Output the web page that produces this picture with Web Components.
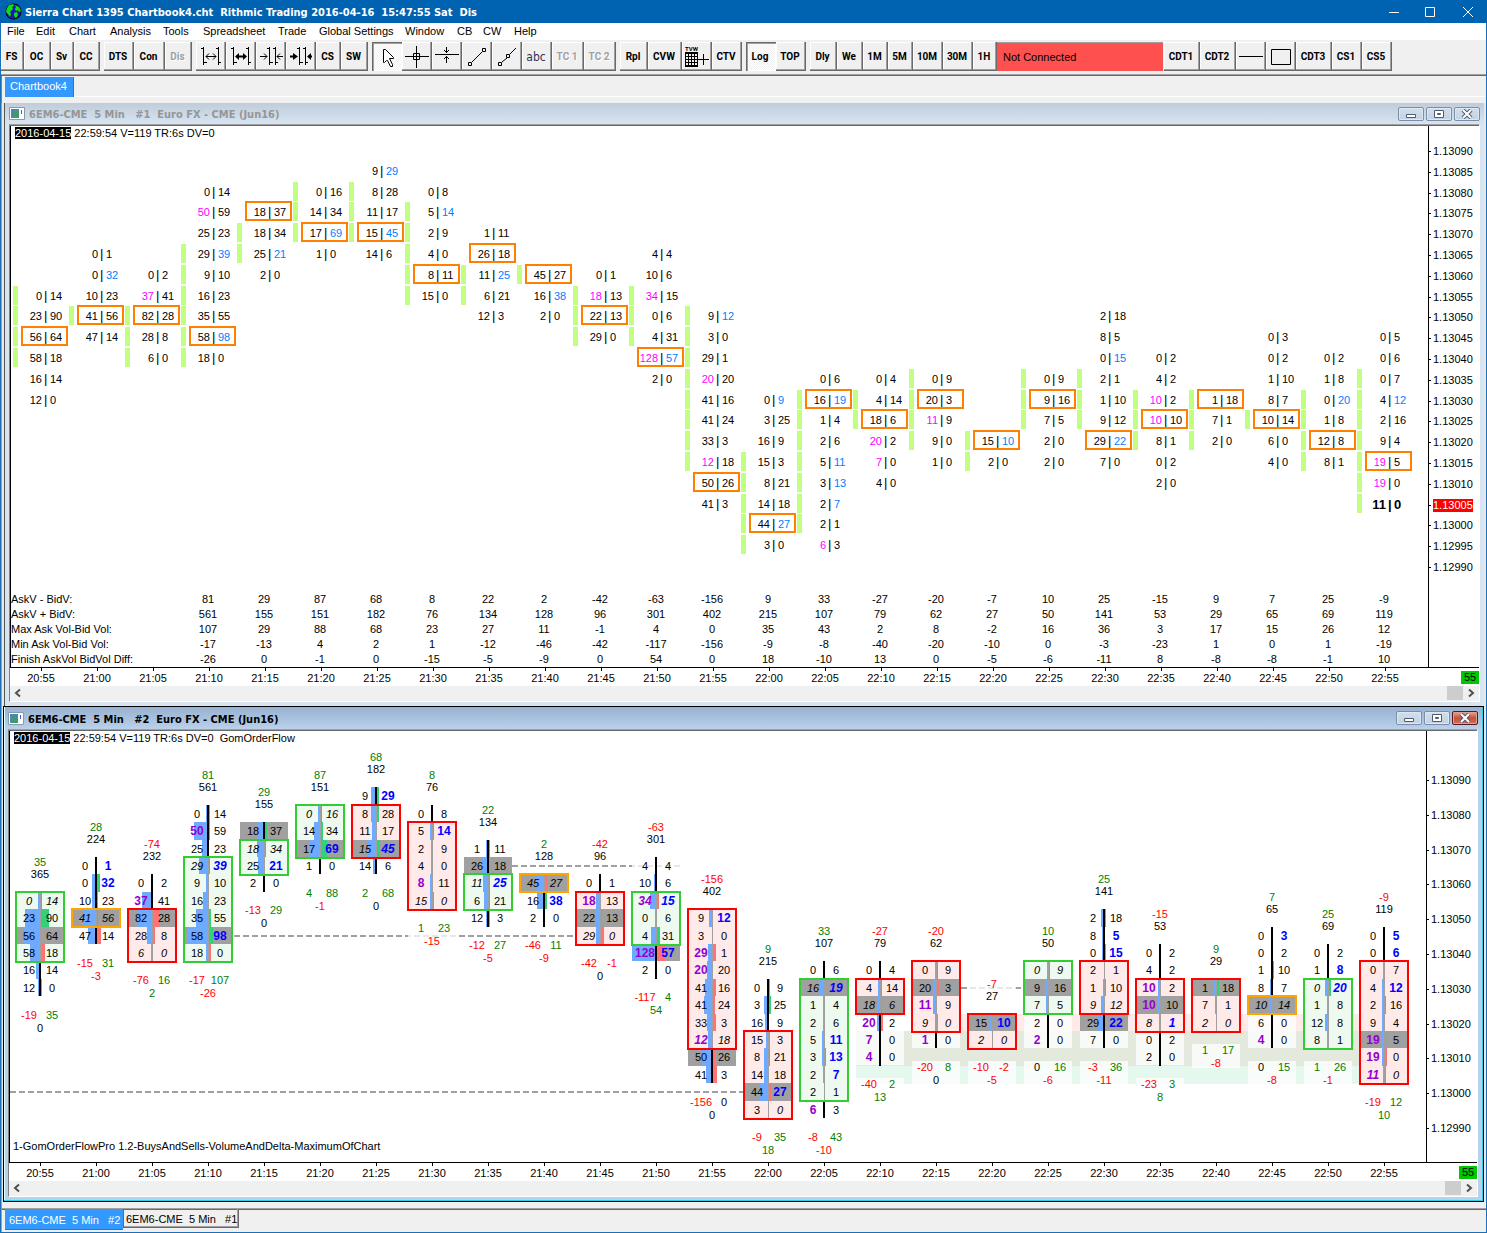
<!DOCTYPE html>
<html lang="en">
<head>
<meta charset="utf-8">
<title>Sierra Chart</title>
<style>
html, body { height: 100%; margin: 0; }
body { font: 11px/13px "Liberation Sans", Arial, sans-serif; color: #000; background: #f0f0f0; overflow: hidden; }
</style>
</head>
<body>
<sc-app></sc-app>
<script>
const COLUMN = 56;
const TIMES = Array.from({ length: 25 }, (_, i) => {
  const m = 20 * 60 + 55 + i * 5;
  return String(Math.floor(m / 60)) + ':' + String(m % 60).padStart(2, '0');
});

// Each bar: first price row, rows "sell|buy" (b bold, i italic, * point of control),
// value box, delta and volume above, min / max / finish delta below.
const FLOW = [
  [7, 'i0|i14 23|90 56|64* 58|18 16|14 12|0', 'g', 7, 10, 35, 365, -19, 35, 0],
  [5, '0|b1 0|b32 10|23 i41|i56* 47|14', 'o', 8, 8, 28, 224, -15, 31, -3],
  [6, '0|2 b37|41 82|28* 28|8 i6|i0', 'r', 8, 10, -74, 232, -76, 16, 2],
  [2, '0|14 b50|59 25|23 i29|bi39 9|10 16|23 35|55 58|b98* 18|0', 'g', 5, 10, 81, 561, -17, 107, -26],
  [3, '18|37* i18|i34 25|b21 2|0', 'g', 4, 5, 29, 155, -13, 29, 0],
  [2, 'i0|i16 14|34 17|b69* 1|0', 'g', 2, 4, 87, 151, 4, 88, -1],
  [1, '9|b29 8|28 11|17 i15|bi45* 14|6', 'r', 2, 4, 68, 182, 2, 68, 0],
  [2, '0|8 5|b14 2|9 4|0 b8|11 i15|i0', 'r', 3, 7, 8, 76, 1, 23, -15],
  [4, '1|11 26|18* i11|bi25 6|21 12|3', 'g', 6, 7, 22, 134, -12, 27, -5],
  [6, 'i45|i27* 16|b38 2|0', 'o', 6, 6, 2, 128, -46, 11, -9],
  [6, '0|1 b18|13 22|13* i29|i0', 'r', 7, 9, -42, 96, -42, -1, 0],
  [5, '4|4 10|6 bi34|bi15 0|6 4|31 b128|b57* 2|0', 'g', 7, 9, -63, 301, -117, 4, 54],
  [8, '9|b12 3|0 b29|1 b20|20 41|16 41|24 33|3 bi12|i18 50|26* 41|3', 'r', 8, 15, -156, 402, -156, 0, 0],
  [12, '0|9 3|25 16|9 15|3 8|21 14|18 44|b27* 3|i0', 'r', 15, 19, 9, 215, -9, 35, 18],
  [11, '0|6 i16|bi19* 1|4 2|6 5|b11 3|b13 2|b7 2|1 b6|3', 'g', 12, 18, 33, 107, -8, 43, -10],
  [11, '0|4 4|14 i18|i6* b20|2 b7|0 b4|0', 'r', 12, 13, -27, 79, -40, 2, 13],
  [11, '0|9 20|3* b11|9 i9|i0 b1|0', 'r', 11, 14, -20, 62, -20, 8, 0],
  [14, '15|b10* i2|i0', 'r', 14, 15, -7, 27, -10, -2, -5],
  [11, 'i0|i9 9|16* 7|5 2|0 b2|0', 'g', 11, 13, 10, 50, 0, 16, -6],
  [8, '2|18 8|b5 0|b15 2|1 1|10 i9|i12 29|b22* 7|0', 'r', 11, 13, 25, 141, -3, 36, -11],
  [10, '0|2 4|2 b10|2 b10|10* i8|bi1 0|2 2|0', 'r', 12, 14, -15, 53, -23, 3, 8],
  [12, '1|18* 7|1 i2|i0', 'r', 12, 14, 9, 29, 1, 17, -8],
  [9, '0|b3 0|2 1|10 8|7 i10|i14* 6|0 b4|0', 'o', 13, 13, 7, 65, 0, 15, -8],
  [10, '0|2 1|b8 i0|bi20 1|8 12|8 8|1', 'g', 12, 15, 25, 69, 1, 26, -1],
  [9, '0|b5 0|b6 0|7 4|b12 2|16 9|4 b19|5* b19|0 bi11|i0', 'r', 11, 17, -9, 119, -19, 12, 10]
];

// Each bar: first row, cells (b highlighted, * point of control), first and last row of the body.
const NUMBERS = [
  [7, '0|14 23|90 56|64* 58|18 16|14 12|0', 7, 10],
  [5, '0|1 0|b32 10|23 41|56* 47|14', 8, 8],
  [6, '0|2 b37|41 82|28* 28|8 6|0', 8, 10],
  [2, '0|14 b50|59 25|23 29|b39 9|10 16|23 35|55 58|b98* 18|0', 5, 10],
  [3, '18|37* 18|34 25|b21 2|0', 4, 5],
  [2, '0|16 14|34 17|b69* 1|0', 2, 4],
  [1, '9|b29 8|28 11|17 15|b45* 14|6', 2, 4],
  [2, '0|8 5|b14 2|9 4|0 8|11* 15|0', 3, 7],
  [4, '1|11 26|18* 11|b25 6|21 12|3', 6, 7],
  [6, '45|27* 16|b38 2|0', 6, 6],
  [6, '0|1 b18|13 22|13* 29|0', 7, 9],
  [5, '4|4 10|6 b34|15 0|6 4|31 b128|b57* 2|0', 7, 9],
  [8, '9|b12 3|0 29|1 b20|20 41|16 41|24 33|3 b12|18 50|26* 41|3', 8, 15],
  [12, '0|b9 3|25 16|9 15|3 8|21 14|18 44|b27* 3|0', 15, 19],
  [11, '0|6 16|b19* 1|4 2|6 5|b11 3|b13 2|b7 2|1 b6|3', 12, 18],
  [11, '0|4 4|14 18|6* b20|2 b7|0 4|0', 12, 13],
  [11, '0|9 20|3* b11|9 9|0 1|0', 11, 14],
  [14, '15|b10* 2|0', 14, 15],
  [11, '0|9 9|16* 7|5 2|0 2|0', 11, 13],
  [8, '2|18 8|5 0|b15 2|1 1|10 9|12 29|b22* 7|0', 11, 13],
  [10, '0|2 4|2 b10|2 b10|10* 8|1 0|2 2|0', 12, 14],
  [12, '1|18* 7|1 2|0', 12, 14],
  [9, '0|3 0|2 1|10 8|7 10|14* 6|0 4|0', 13, 13],
  [10, '0|2 1|8 0|b20 1|8 12|8* 8|1', 12, 15],
  [9, '0|5 0|6 0|7 4|b12 2|16 9|4 b19|5* b19|0 11|0!', 11, 17]
];

const STUDY = [
  ['AskV - BidV:', '81 29 87 68 8 22 2 -42 -63 -156 9 33 -27 -20 -7 10 25 -15 9 7 25 -9'],
  ['AskV + BidV:', '561 155 151 182 76 134 128 96 301 402 215 107 79 62 27 50 141 53 29 65 69 119'],
  ['Max Ask Vol-Bid Vol:', '107 29 88 68 23 27 11 -1 4 0 35 43 2 8 -2 16 36 3 17 15 26 12'],
  ['Min Ask Vol-Bid Vol:', '-17 -13 4 2 1 -12 -46 -42 -117 -156 -9 -8 -40 -20 -10 0 -3 -23 1 0 1 -19'],
  ['Finish AskVol BidVol Diff:', '-26 0 -1 0 -15 -5 -9 0 54 0 18 -10 13 0 -5 -6 -11 8 -8 -8 -1 10']
];

class Base extends HTMLElement {
  constructor() { super(); this.attachShadow({ mode: 'open' }); }
  connectedCallback() { this.shadowRoot.innerHTML = `<style>*{box-sizing:border-box}${this.css()}</style>${this.html()}`; }
}

customElements.define('sc-app', class extends Base {
  css() { return `
    :host { display: flex; flex-direction: column; height: 100vh; box-sizing: border-box; border: solid #1a70b8; border-width: 0 1px 1px; }
    main { flex: 1; min-height: 0; display: grid; grid-template: minmax(0, 603fr) minmax(0, 496fr) / minmax(0, 1fr); border-left: 1px solid #a0a0a0; background: #e8e8e8; padding-right: 2px; }
    sc-window:first-child { margin-left: 2px; }
    sc-window:last-child { margin-left: 1px; }`; }
  html() { return `
    <sc-titlebar></sc-titlebar>
    <sc-menubar></sc-menubar>
    <sc-toolbar></sc-toolbar>
    <sc-booktabs></sc-booktabs>
    <main>
      <sc-window caption="6EM6-CME  5 Min   #1  Euro FX - CME (Jun16)"><numbers-chart></numbers-chart></sc-window>
      <sc-window active caption="6EM6-CME  5 Min   #2  Euro FX - CME (Jun16)"><flow-chart></flow-chart></sc-window>
    </main>
    <sc-charttabs></sc-charttabs>`; }
});

customElements.define('sc-titlebar', class extends Base {
  css() { return `
    :host { display: flex; align-items: center; height: 23px; background: #0063b1; color: #fff; margin: 0 -1px; padding: 0 9px 0 5px; box-sizing: border-box; flex: none; }
    h1 { flex: 1; margin: 0; padding: 1px 0 0 3px; font: bold 11px/13px "DejaVu Sans Condensed", sans-serif; white-space: pre; }
    nav { display: flex; gap: 17px; }
    button { all: unset; width: 20px; height: 20px; display: flex; }`; }
  html() { return `
    <svg width="17" height="17" viewBox="0 0 17 17"><circle cx="8.500" cy="8.500" r="8" fill="#000"/><circle cx="8.500" cy="8.500" r="7.200" fill="#1818b8"/><path d="M2 5l2-3 4-1 1 2-2 1 1 2-3 3 1 2-1 3-2-3-2-2zM10 2l4 2 2 4-2 1-1-2-2 1-1-2 1-2zM9 10l3-1 1 3-2 3-2-2zM5 4h2v1H5z" fill="#10e010"/></svg>
    <h1>Sierra Chart 1395 Chartbook4.cht  Rithmic Trading 2016-04-16  15:47:55 Sat  Dis</h1>
    <nav>
      <button aria-label="Minimize"><svg width="20" height="20"><path d="M5 10.500h10" stroke="#fff"/></svg></button>
      <button aria-label="Maximize"><svg width="20" height="20"><path d="M4.500 5.500h9v9h-9z" stroke="#fff" fill="none"/></svg></button>
      <button aria-label="Close"><svg width="20" height="20"><path d="M5 5l10 10M15 5L5 15" stroke="#fff"/></svg></button>
    </nav>`; }
});

customElements.define('sc-menubar', class extends Base {
  css() { return `
    :host { display: flex; align-items: center; height: 17px; background: #fff; flex: none; }
    button { all: unset; padding: 0 6px; line-height: 19px; }`; }
  html() { return [['File', 29], ['Edit', 33], ['Chart', 41], ['Analysis', 53], ['Tools', 40], ['Spreadsheet', 75], ['Trade', 41], ['Global Settings', 86], ['Window', 52], ['CB', 26], ['CW', 31], ['Help', 33]]
    .map(([t, w]) => `<button style="width:${w - 12}px;white-space:nowrap">${t}</button>`).join(''); }
});

const ICONS = {
  spread: '<path d="M5 6.500h2M7.500 5v18M8 20.500h3M20 6.500h2M22.500 5v18M23 20.500h2M10 14.500h10M13 11.500l-3 3 3 3M17 11.500l3 3-3 3"/>',
  spreadBold: '<path d="M5 6.500h2M7.500 5v18M8 20.500h3M20 6.500h2M22.500 5v18M23 20.500h2"/><path d="M11 14.500h8" stroke-width="2"/><path d="M13 11v7l-4-3.500zM17 11v7l4-3.500z" fill="#000" stroke="none"/>',
  squeeze: '<path d="M11 6.500h2M13.500 5v18M14 20.500h3M17 6.500h2M19.500 5v18M20 20.500h2M4 14.500h7M8 11.500l3 3-3 3M27 14.500h-6M24 11.500l-3 3 3 3"/>',
  squeezeBold: '<path d="M11 6.500h2M13.500 5v18M14 20.500h3M17 6.500h2M19.500 5v18M20 20.500h2"/><path d="M4 14.500h5M26 14.500h-3" stroke-width="2"/><path d="M7 11v7l5-3.500zM25 11v7l-4-3.500z" fill="#000" stroke="none"/>',
  pointer: '<path d="M11.500 7.500v13h1l2-2h1l3 6h2v-2l-3-6h4v-1l-8-8z" fill="#fff"/>',
  cross: '<path d="M3 14.500h24M14.500 4v22M11.500 11.500h6v6h-6z"/>',
  level: '<path d="M3 12.500h24M14.500 5v6M12 8l2.500 2.500L17 8M14.500 14v7M12 17l2.500-2.500L17 17"/>',
  line: '<path d="M6.500 20.500h3v3h-3zM20.500 6.500h3v3h-3zM10 20l10-10"/>',
  ray: '<path d="M6.500 20.500h3v3h-3zM14.500 12.500h3v3h-3zM10 20l5-4M18 12l6-6"/>',
  tvw: '<text x="3" y="9" font-size="6" stroke="none" fill="#000">TVW</text><path d="M3.500 11v14M6.500 11v14M9.500 11v14M12.500 11v14M15.500 11v14M3 11.500h13M3 14.500h13M3 17.500h13M3 20.500h13M3 23.500h13M16 17.500h11M21.500 12v11"/><path d="M3 10h13v2H3zM3 24h13v1H3z" fill="#000" stroke="none"/>',
  hline: '<path d="M3 14.500h24"/>',
  rect: '<path d="M5.500 7.500h19v15h-19z"/>'
};

customElements.define('sc-tool', class extends Base {
  css() { return `
    :host { display: block; height: 29px; flex: none; }
    button { all: unset; box-sizing: border-box; width: 100%; height: 29px; display: flex; justify-content: center; align-items: center; background: #f0f0f0;
      box-shadow: inset -1px -1px #696969, inset -2px -2px #a0a0a0, inset 1px 1px #fff;
      font: bold 10px/14px Roboto, "Liberation Sans", sans-serif; white-space: nowrap; padding-right: 2px; }
    button:has(svg) { padding: 0; }
    :host([pressed]) button { background: conic-gradient(#fff 25%, #f0f0f0 0 50%, #fff 0 75%, #f0f0f0 0) 0 0/2px 2px; box-shadow: inset 1px 1px #696969, inset 2px 2px #a0a0a0, inset -1px -1px #fff; }
    :host([off]) button { color: #a0a0a0; text-shadow: 1px 1px #fff; }
    :host([plain]) button { font: 12px/14px "DejaVu Sans Condensed", sans-serif; color: #333350; }
    svg { display: block; stroke: #000; fill: none; }`; }
  html() {
    const icon = this.getAttribute('icon');
    return icon ? `<button aria-label="${icon}"><svg width="30" height="29">${ICONS[icon]}</svg></button>` : '<button><slot></slot></button>';
  }
});

customElements.define('sc-toolbar', class extends Base {
  css() { return `
    :host { display: flex; height: 36px; padding: 2px 0 0; gap: 4px; background: #f0f0f0; flex: none; box-sizing: border-box; border-bottom: 1px solid #696969; box-shadow: inset 0 -1px #a0a0a0; }
    div { display: flex; }
    output { width: 166px; height: 29px; padding: 0 6px; background: #ff5050; border-top: 1px solid #a0a0a0; display: flex; align-items: center; margin-right: 1px; }`; }
  html() {
    const groups = [
      ['FS:23', 'OC:27', 'Sv:23', 'CC:26'],
      ['DTS:30', 'Con:31', 'Dis:27:off'],
      ['@spread:30', '@spreadBold:30', '@squeeze:30', '@squeezeBold:30', 'CS:25', 'SW:27'],
      ['@pointer:30:pressed', '@cross:30', '@level:30', '@line:30', '@ray:30', 'abc:30:plain', 'TC 1:32:off', 'TC 2:32:off'],
      ['Rpl:28', 'CVW:34', '@tvw:30', 'CTV:30'],
      ['Log:30:pressed', 'TOP:30'],
      ['Dly:27', 'We:26', '1M:25', '5M:25', '10M:30', '30M:30', '1H:24', '=', 'CDT1:36', 'CDT2:36', '@hline:30', '@rect:30', 'CDT3:36', 'CS1:30', 'CS5:30']
    ];
    return groups.map(g => '<div>' + g.map(s => {
      if (s === '=') return '<output>Not Connected</output>';
      const [t, w, a = ''] = s.split(':');
      return t[0] === '@' ? `<sc-tool ${a} icon="${t.slice(1)}" style="width:${w}px"></sc-tool>` : `<sc-tool ${a} style="width:${w}px">${t}</sc-tool>`;
    }).join('') + '</div>').join('');
  }
});

customElements.define('sc-booktabs', class extends Base {
  css() { return `
    :host { display: block; flex: none; height: 27px; padding: 1px 2px 0 1px; box-sizing: border-box; border-left: 1px solid #808080; }
    nav { display: flex; height: 20px; padding-left: 2px; border-bottom: 1px solid #fff; }
    button { all: unset; background: #39f; color: #fff; padding: 1px 6px 2px 5px; height: 17px; line-height: 17px; border-right: 1px solid #696969; }`; }
  html() { return '<nav><button>Chartbook4</button></nav>'; }
});

customElements.define('sc-charttabs', class extends Base {
  css() { return `
    :host { display: block; flex: none; height: 30px; padding-top: 6px; box-sizing: border-box; border-left: 1px solid #a0a0a0; }
    nav { display: flex; align-items: flex-start; border-top: 1px solid #a0a0a0; box-shadow: inset 0 1px #696969; padding-left: 3px; }
    button { all: unset; white-space: pre; box-sizing: border-box; height: 19px; line-height: 20px; width: 116px; padding: 0 2px; border: solid #696969; border-width: 0 1px 1px 0; box-shadow: inset -1px -1px #a0a0a0; }
    button:first-child { background: #39f; color: #fff; height: 21px; line-height: 23px; width: 118px; padding: 0 4px; border-right: 0; box-shadow: none; }
    button:last-child { border-left: 1px solid #696969; }`; }
  html() { return '<nav><button>6EM6-CME  5 Min   #2</button><button>6EM6-CME  5 Min   #1</button></nav>'; }
});

customElements.define('sc-window', class extends Base {
  css() { return `
    :host { display: flex; flex-direction: column; min-height: 0; box-sizing: border-box; border-left: 1px solid #555; padding: 0 4px 4px 4px; background: linear-gradient(#bfcddb, #d7e4f2 21px); }
    :host([active]) { border: 1px solid #000; box-shadow: inset -1px -1px #2cd0e8, inset 1px 0 #dff; padding: 0 5px 4px 4px; background: linear-gradient(#97b1d0, #b9d1ea 22px); }
    header { display: flex; align-items: center; height: 21px; flex: none; gap: 4px; color: #969696; }
    :host([active]) header { height: 22px; color: #000; }
    h2 { flex: 1; margin: 0; font: bold 11px/13px "DejaVu Sans Condensed", sans-serif; white-space: pre; padding-top: 2px; }
    nav { display: flex; gap: 2px; }
    nav button { all: unset; width: 26px; height: 14px; box-sizing: border-box; border: 1px solid #7d8da8; border-radius: 2px; display: flex; justify-content: center; align-items: center; background: linear-gradient(#d2dfec, #c2d2e3); box-shadow: inset 0 0 0 1px #dde8f3; }
    :host([active]) nav button:last-child { background: linear-gradient(#e8a595, #c5513a 50%, #cc7060); border-color: #5c1820; box-shadow: inset 0 0 0 1px #e0a090; }
    section { flex: 1; min-height: 0; display: flex; flex-direction: column; background: #fff; border-top: 1px solid #a0a0a0; box-shadow: inset 0 1px #696969; padding-top: 1px; border-left: 1px solid #808080; border-right: 1px solid #fff; border-bottom: 1px solid #fff; }
    ::slotted(*) { flex: 1; min-height: 0; }`; }
  html() { return `
    <header>
      <svg width="16" height="13"><path d="M.5 .5h15v12h-15z" fill="#fff" stroke="#8a9aaa"/><path d="M2 2h8v9H2z" fill="#4a8aa8"/><path d="M4 5h6v6H4z" fill="#3f9a70"/><path d="M12 3h1v4h-1z" fill="#4060c0"/></svg>
      <h2>${this.getAttribute('caption')}</h2>
      <nav>
        <button aria-label="Minimize"><svg width="12" height="10"><path d="M1.500 5.500h9v3h-9z" fill="#fff" stroke="#505a70"/></svg></button>
        <button aria-label="Restore"><svg width="12" height="10"><path d="M1.500 1.500h9v7h-9z" fill="#fff" stroke="#505a70"/><path d="M4.500 4.500h3v1h-3z" fill="none" stroke="#505a70"/></svg></button>
        <button aria-label="Close"><svg width="12" height="10"><path d="M2 1l8 8M10 1L2 9" stroke="#505a70" stroke-width="4"/><path d="M2 1l8 8M10 1L2 9" stroke="#fff" stroke-width="2"/></svg></button>
      </nav>
    </header>
    <section><slot></slot><sc-scrollbar></sc-scrollbar></section>`; }
});

customElements.define('sc-scrollbar', class extends Base {
  css() { return `
    :host { display: flex; flex: none; height: 15px; background: #f0f0f0; padding: 0 1px; justify-content: space-between; }
    button { all: unset; width: 14px; height: 14px; }
    i { width: 16px; height: 14px; background: #cdcdcd; }
    div { display: flex; gap: 1px; }
    svg { display: block; fill: none; stroke: #505050; stroke-width: 2; }`; }
  html() { return `
    <button aria-label="Scroll left"><svg width="14" height="14"><path d="M9 3.500L5 7l4 3.500"/></svg></button>
    <div><i></i><button aria-label="Scroll right"><svg width="14" height="14"><path d="M5 3.500L9 7l-4 3.500"/></svg></button></div>`; }
});

customElements.define('time-axis', class extends Base {
  css() { return `
    :host { display: flex; flex: none; height: 18px; padding: 0 0 0 3px; background: #fff; }
    ol { list-style: none; margin: 0; padding: 0; display: flex; flex: 1; min-width: 0; overflow: hidden; }
    li { width: ${COLUMN}px; flex: none; text-align: center; line-height: 14px; }
    li::before { content: ""; display: block; width: 1px; height: 3px; margin: 0 auto; background: #000; }
    b { font-weight: normal; background: #00c800; width: 18px; height: 13px; margin-top: 3px; text-align: center; }`; }
  html() { return `<ol>${TIMES.map(t => `<li>${t}</li>`).join('')}</ol><b>55</b>`; }
});

customElements.define('price-axis', class extends Base {
  css() { return `
    :host { display: block; box-sizing: border-box; border-left: 1px solid #000; flex: none; background: #fff; }
    ol { list-style: none; margin: 0; padding: 0; display: flex; flex-direction: column; justify-content: space-between; }
    li { display: flex; align-items: center; gap: 2px; height: 15px; line-height: 13px; }
    li::before { content: ""; width: 2px; height: 1px; background: #000; }
    mark { background: #f00; color: #fff; }`; }
  html() {
    const step = +this.getAttribute('step'), out = [];
    for (let p = 113090; p >= 112990; p -= step) {
      const t = (p / 100000).toFixed(5);
      out.push(`<li>${t === this.getAttribute('last') ? `<mark>${t}</mark>` : t}</li>`);
    }
    return `<ol>${out.join('')}</ol>`;
  }
});

const FRAME = `
  :host { display: flex; flex-direction: column; min-width: 0; }
  .body { flex: 1; min-height: 0; display: flex; border-bottom: 1px solid #000; border-left: 1px solid #000; }
  .plot { flex: 1; min-width: 0; display: grid; grid-template: minmax(0, 1fr) / minmax(0, 1fr); overflow: hidden; }
  .plot > * { grid-area: 1 / 1; }
  .plot > svg { width: 100%; height: 100%; display: block; }
  .head { align-self: start; margin: 0; padding: 1px 4px; white-space: pre; line-height: 12px; }
  .head mark { background: #000; color: #fff; }
  text { text-anchor: middle; }`;

customElements.define('numbers-chart', class extends Base {
  css() { return FRAME + `
    price-axis { width: 51px; padding-top: 18px; }
    table { align-self: end; border-collapse: collapse; table-layout: fixed; width: 1401px; }
    th { width: 169px; font-weight: normal; text-align: left; white-space: nowrap; }
    th, td { padding: 0; height: 15px; line-height: 13px; }
    td { text-align: center; }
    .l { text-anchor: end; } .r, .m { text-anchor: start; } .m { font-size: 13px; }
    .now { font-weight: bold; font-size: 13px; }`; }
  draw() {
    const y = r => Math.floor(24.5 + 20.8 * r);
    let s = '';
    NUMBERS.forEach(([first, cells, from, to], i) => {
      const x = 30 + COLUMN * i;
      for (let r = from; r <= to; r++) s += `<rect x="${x - 28}" y="${y(r) - 10}" width="5" height="19" fill="#c0ff80"/>`;
      cells.split(' ').forEach((c, k) => {
        const cy = y(first + k), now = c.endsWith('!');
        if (c.endsWith('*')) s += `<rect x="${x - 19}" y="${cy - 10}" width="45" height="18" fill="#fff" stroke="#ff8000" stroke-width="2"/>`;
        const [a, b] = c.replace(/[*!]/, '').split('|');
        const fa = a[0] === 'b' ? '#f0f' : '#000', fb = b[0] === 'b' ? '#0080ff' : '#000';
        s += `<text y="${cy + (now ? 5 : 4)}"${now ? ' class="now"' : ''}><tspan class="l" x="${x + 1}" fill="${fa}">${a.replace('b', '')}</tspan><tspan class="m" x="${x + 3}">|</tspan><tspan class="r" x="${x + 9}" fill="${fb}">${b.replace('b', '')}</tspan></text>`;
      });
    });
    return s;
  }
  html() { return `
    <div class="body"><div class="plot"><svg>${this.draw()}</svg>
      <p class="head"><mark>2016-04-15</mark> 22:59:54 V=119 TR:6s DV=0</p>
      <table>${STUDY.map(([h, v]) => `<tr><th scope="row">${h}</th>${v.split(' ').map(n => `<td>${n}</td>`).join('')}</tr>`).join('')}</table>
    </div><price-axis step="5" last="1.13005"></price-axis></div>
    <time-axis></time-axis>`; }
  connectedCallback() {
    super.connectedCallback();
    this.shadowRoot.querySelector('price-axis').shadowRoot.querySelector('ol').style.height = '431px';
  }
});

customElements.define('flow-chart', class extends Base {
  css() { return FRAME + `
    price-axis { width: 51px; padding-top: 42px; }
    .foot { align-self: end; margin: 0; padding: 0 3px 10px; line-height: 12px; }
    .b { font-weight: bold; font-size: 12px; } .i { font-style: italic; }`; }
  draw() {
    const y = r => Math.floor(48.5 + 17.4 * r), mid = i => 30 + COLUMN * i;
    const rect = (x, t, w, h, f, extra = '') => `<rect x="${x}" y="${t}" width="${w}" height="${h}" fill="${f}" ${extra}/>`;
    const dash = (x1, x2, r) => `<path d="M${x1} ${y(r)}H${x2}" stroke="#a0a0a0" stroke-width="2" stroke-dasharray="6 3"/>`;
    const tint = n => n > 0 ? '#008000' : n < 0 ? '#f00' : '#000';
    let s = rect(mid(16) - 24, y(14) - 9, 456, 17, '#ffeaea') + rect(mid(15) - 24, y(15) - 9, 504, 35, '#e4e9de') + rect(mid(15) - 24, y(17) - 9, 504, 18, '#e4f8ee');
    s += dash(mid(3) + 26, mid(10) - 25, 9) + dash(mid(8) + 24, mid(11) + 25, 5) + dash(0, mid(13) - 25, 18) + dash(mid(16) + 25, mid(18) - 25, 12);
    FLOW.forEach(([first, cells, kind, from, to, delta, volume, lo, hi, end], i) => {
      const x = mid(i), rows = cells.split(' '), top = y(first), bottom = y(first + rows.length - 1);
      const veil = (t, h) => rect(x - 24, t, 48, h, '#fff', 'opacity=".75"');
      s += veil(top - 45, 24) + veil(top - 9, bottom - top + 17) + veil(bottom + 21, 24);
      const fill = { g: '#eefaf0', r: '#ffeaea', o: '#a0a0a0' }[kind], edge = { g: '#32cd32', r: '#f00', o: '#ffa500' }[kind];
      s += rect(x - 24, y(from) - 9, 48, y(to) - y(from) + 17, fill);
      rows.forEach((c, k) => {
        const r = first + k, cy = y(r), h = y(r + 1) - cy;
        const [a, b] = c.replace(/[bi*]/g, '').split('|').map(Number);
        if (c.endsWith('*')) s += rect(x - 24, cy - 9, 48, h, '#a0a0a0');
        const w = Math.round((a + b) * 24 / 185), d = Math.floor(Math.abs(a - b) * 23 / 185);
        if (w) s += rect(x - w, cy - 9, w, h, '#6eaaff');
        if (d) s += rect(x + 1, cy - 9, d, h, b > a ? '#33d27a' : '#ff7373');
        s += r >= from && r <= to ? rect(x, cy - 9, 1, h, '#a0a0a0') : rect(x - 1, cy - 9, 2, h, '#000');
      });
      s += rect(x - 24, y(from) - 9, 48, y(to) - y(from) + 18, 'none', `stroke="${edge}" stroke-width="2"`);
      s += `<text x="${x}" y="${top - 35}" fill="${tint(delta)}">${delta}</text><text x="${x}" y="${top - 23}">${volume}</text>`;
      rows.forEach((c, k) => {
        const cy = y(first + k);
        c.replace('*', '').split('|').forEach((v, side) => {
          const bold = v.includes('b'), cls = (bold ? 'b ' : '') + (v.includes('i') ? 'i' : '');
          s += `<text x="${x + (side ? 12 : -11)}" y="${cy + 4}" class="${cls}" fill="${bold ? (side ? '#00f' : '#9400d3') : '#000'}">${v.replace(/[bi]/g, '')}</text>`;
        });
      });
      s += `<text x="${x - 11}" y="${bottom + 31}" fill="${tint(lo)}">${lo}</text><text x="${x + 12}" y="${bottom + 31}" fill="${tint(hi)}">${hi}</text><text x="${x}" y="${bottom + 44}" fill="${tint(end)}">${end}</text>`;
    });
    return s;
  }
  html() { return `
    <div class="body"><div class="plot"><svg>${this.draw()}</svg>
      <p class="head"><mark>2016-04-15</mark> 22:59:54 V=119 TR:6s DV=0  GomOrderFlow</p>
      <p class="foot">1-GomOrderFlowPro 1.2-BuysAndSells-VolumeAndDelta-MaximumOfChart</p>
    </div><price-axis step="10"></price-axis></div>
    <time-axis></time-axis>`; }
  connectedCallback() {
    super.connectedCallback();
    this.shadowRoot.querySelector('price-axis').shadowRoot.querySelector('ol').style.height = '363px';
  }
});
</script>
</body>
</html>
